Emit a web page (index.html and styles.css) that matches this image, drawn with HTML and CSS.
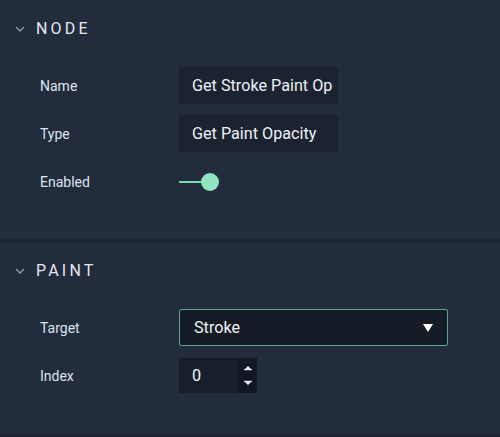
FILE: index.html
```html
<!DOCTYPE html>
<html>
<head>
<meta charset="utf-8">
<link rel="stylesheet" href="styles.css">
</head>
<body>
<div class="panel">
  <section class="section">
    <div class="header">
      <svg class="chev" width="10" height="6" viewBox="0 0 10 6"><path d="M1 1 L5 5 L9 1" fill="none" stroke="#8a94a3" stroke-width="1.5"/></svg>
      <span class="title">NODE</span>
    </div>
    <div class="rows">
      <div class="row">
        <span class="label">Name</span>
        <div class="field">Get Stroke Paint Op</div>
      </div>
      <div class="row">
        <span class="label">Type</span>
        <div class="field">Get Paint Opacity</div>
      </div>
      <div class="row">
        <span class="label">Enabled</span>
        <div class="toggle"><span class="track"></span><span class="knob"></span></div>
      </div>
    </div>
  </section>
  <section class="section section-paint">
    <div class="header">
      <svg class="chev" width="10" height="6" viewBox="0 0 10 6"><path d="M1 1 L5 5 L9 1" fill="none" stroke="#8a94a3" stroke-width="1.5"/></svg>
      <span class="title">PAINT</span>
    </div>
    <div class="rows">
      <div class="row">
        <span class="label">Target</span>
        <div class="select">
          <span>Stroke</span>
          <svg width="10" height="8" viewBox="0 0 10 8"><path d="M0 0 H10 L5 8 Z" fill="#ffffff"/></svg>
        </div>
      </div>
      <div class="row row-index">
        <span class="label">Index</span>
        <div class="number">
          <span class="num-val">0</span>
          <div class="spin">
            <svg width="10" height="6" viewBox="0 0 10 6"><path d="M2 4 L5 1 L8 4 Z" fill="#e6eaf0"/><rect x="1" y="4" width="8" height="1.2" fill="#e6eaf0"/></svg>
            <svg width="10" height="6" viewBox="0 0 10 6"><rect x="1" y="0.8" width="8" height="1.2" fill="#e6eaf0"/><path d="M2 2 L5 5 L8 2 Z" fill="#e6eaf0"/></svg>
          </div>
        </div>
      </div>
    </div>
  </section>
</div>
</body>
</html>
```

FILE: styles.css
```css
* { box-sizing: border-box; }
html, body {
  margin: 0;
  padding: 0;
  background: #222c3d;
  font-family: Roboto, "Noto Sans", sans-serif;
}
.panel {
  width: 500px;
  height: 437px;
  display: flex;
  flex-direction: column;
}
.section {
  height: 242px;
  border-bottom: 3px solid #1c2432;
  padding-top: 14px;
}
.section-paint {
  height: 195px;
}
.header {
  height: 29px;
  display: flex;
  align-items: center;
  padding-left: 15px;
}
.chev {
  margin-right: 11px;
  margin-top: 1px;
}
.title {
  color: #e3e8ef;
  font-size: 16px;
  letter-spacing: 3.2px;
  font-weight: 400;
}
.rows {
  margin-top: 24px;
  display: flex;
  flex-direction: column;
  gap: 11px;
}
.row {
  height: 37px;
  display: flex;
  align-items: center;
}
.row-index {
  height: 35px;
  margin-top: 1px;
}
.label {
  width: 179px;
  flex: none;
  padding-left: 40px;
  color: #dde4ee;
  font-size: 14px;
}
.field {
  width: 159px;
  height: 37px;
  background: #1b2331;
  color: #eef1f5;
  font-size: 16.2px;
  line-height: 37px;
  padding-left: 13px;
  white-space: nowrap;
  overflow: hidden;
}
.toggle {
  position: relative;
  width: 40px;
  height: 18px;
  display: flex;
  align-items: center;
}
.track {
  width: 28px;
  height: 2px;
  background: #7fd6b3;
}
.knob {
  position: absolute;
  left: 22px;
  top: 0;
  width: 18px;
  height: 18px;
  border-radius: 50%;
  background: #92e3c2;
}
.select {
  width: 269px;
  height: 37px;
  border: 1px solid #5fa68d;
  border-radius: 2px;
  background: #161c26;
  color: #eef1f5;
  font-size: 16.2px;
  display: flex;
  align-items: center;
  justify-content: space-between;
  padding: 0 14px 0 14px;
}
.number {
  width: 78px;
  height: 35px;
  background: #181f2b;
  display: flex;
}
.num-val {
  flex: 1;
  color: #eef1f5;
  font-size: 16.2px;
  line-height: 35px;
  padding-left: 13px;
}
.spin {
  width: 19px;
  background: #121822;
  display: flex;
  flex-direction: column;
  align-items: center;
  justify-content: center;
  gap: 9px;
}
```
